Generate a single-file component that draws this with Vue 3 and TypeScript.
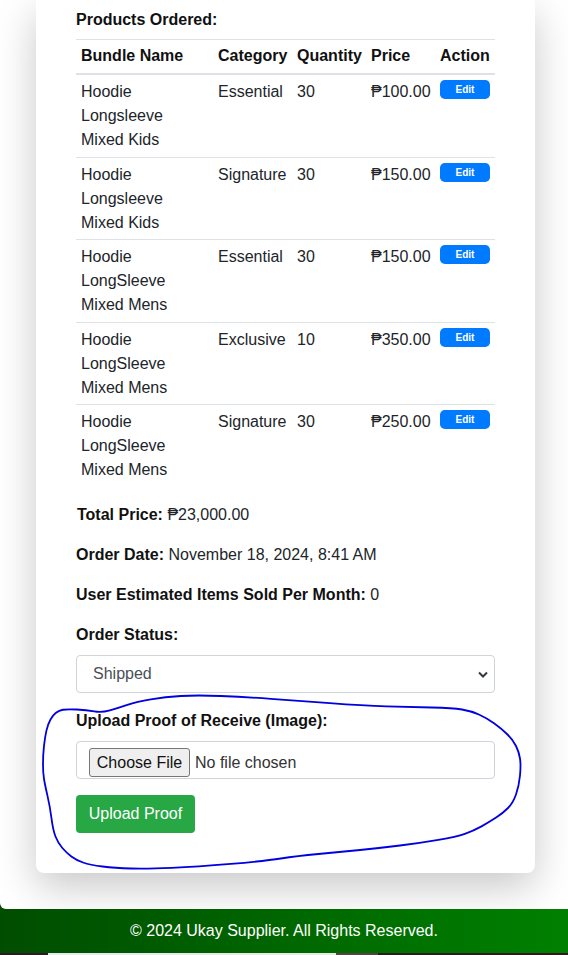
<script setup lang="ts">
interface Row { name: string[]; category: string; qty: number; price: string }
const rows: Row[] = [
  { name: ['Hoodie', 'Longsleeve', 'Mixed Kids'], category: 'Essential', qty: 30, price: '₱100.00' },
  { name: ['Hoodie', 'Longsleeve', 'Mixed Kids'], category: 'Signature', qty: 30, price: '₱150.00' },
  { name: ['Hoodie', 'LongSleeve', 'Mixed Mens'], category: 'Essential', qty: 30, price: '₱150.00' },
  { name: ['Hoodie', 'LongSleeve', 'Mixed Mens'], category: 'Exclusive', qty: 10, price: '₱350.00' },
  { name: ['Hoodie', 'LongSleeve', 'Mixed Mens'], category: 'Signature', qty: 30, price: '₱250.00' },
]

const pts: [number, number][] = [
  [101.7, 712.7], [118, 708], [136.7, 701.7], [165, 697], [196.7, 695], [245, 697], [296.7, 700.7],
  [363, 705.7], [410, 707], [453, 708], [471, 711], [486.7, 718], [502, 729], [513, 740], [519, 752], [521, 765],
  [519, 786], [513, 803], [503, 813], [490, 821.7], [473, 831], [456.7, 836.7], [420, 843], [380, 848], [340, 852],
  [296.7, 856], [265, 861], [196.7, 866.7], [146.7, 869], [115, 868], [90, 865], [76, 860], [66.7, 853], [58, 843], [53, 830],
  [50, 806.7], [45, 785], [43, 773], [43, 755], [45, 736.7], [48, 724], [53, 715], [59, 710.5], [66.7, 709], [86.7, 710],
]
const scribble = (() => {
  const mid = (a: [number, number], b: [number, number]) => `${(a[0] + b[0]) / 2} ${(a[1] + b[1]) / 2}`
  let d = `M${mid(pts[pts.length - 1], pts[0])}`
  pts.forEach((p, i) => {
    d += ` Q${p[0]} ${p[1]} ${mid(p, pts[(i + 1) % pts.length])}`
  })
  return d + ' Z'
})()
</script>

<template>
  <div class="page">
    <main class="stage">
      <section class="card">
        <p class="heading"><strong>Products Ordered:</strong></p>
        <table class="table">
          <thead>
            <tr>
              <th class="c1">Bundle Name</th>
              <th class="c2">Category</th>
              <th class="c3">Quantity</th>
              <th class="c4">Price</th>
              <th class="c5">Action</th>
            </tr>
          </thead>
          <tbody>
            <tr v-for="(r, i) in rows" :key="i">
              <td><span v-for="n in r.name" :key="n" class="line">{{ n }}</span></td>
              <td>{{ r.category }}</td>
              <td>{{ r.qty }}</td>
              <td>{{ r.price }}</td>
              <td><button class="edit" type="button">Edit</button></td>
            </tr>
          </tbody>
        </table>
        <p class="total"><strong>Total Price:</strong> ₱23,000.00</p>
        <p class="info"><strong>Order Date:</strong> November 18, 2024, 8:41 AM</p>
        <p class="info"><strong>User Estimated Items Sold Per Month:</strong> 0</p>
        <p class="label"><strong>Order Status:</strong></p>
        <div class="select">
          <span>Shipped</span>
          <svg width="10" height="7" viewBox="0 0 10 7"><path d="M1 1.5 L5 5.5 L9 1.5" fill="none" stroke="#343a40" stroke-width="2"/></svg>
        </div>
        <p class="label upload-label"><strong>Upload Proof of Receive (Image):</strong></p>
        <div class="file">
          <span class="choose">Choose File</span>
          <span class="none">No file chosen</span>
        </div>
        <button class="upload" type="button">Upload Proof</button>
      </section>
      <svg class="scribble" width="568" height="955" viewBox="0 0 568 955">
        <path :d="scribble" fill="none" stroke="#0000e0" stroke-width="1.8"/>
      </svg>
    </main>
    <footer class="footer">© 2024 Ukay Supplier. All Rights Reserved.</footer>
    <div class="strip">
      <span class="s-a"></span><span class="s-b"></span><span class="s-c"></span>
    </div>
  </div>
</template>

<style>
html, body { margin: 0; padding: 0; background: #fff; overflow: hidden; }
</style>

<style scoped>
.page { width: 568px; height: 955px; overflow: hidden; background: #004d00; font-family: "Liberation Sans", Arial, sans-serif; font-size: 16px; line-height: 24px; color: #212529; display: flex; flex-direction: column; }
.stage { position: relative; height: 909px; flex: none; background: #fff; border-bottom-left-radius: 6px; overflow: hidden; }
.card { box-sizing: border-box; width: 499px; height: 873px; margin-left: 36px; padding: 8px 40px 0; background: #fff; border-radius: 0 0 8px 8px; box-shadow: 0 14px 40px rgba(0,0,0,.22); }
.heading { margin: 0 0 7px; }
strong { font-weight: 700; color: #111; }
.table { width: 419px; border-collapse: collapse; table-layout: fixed; color: #212529; }
th { text-align: left; padding: 4px 5px 5px; line-height: 24px; border-top: 1px solid #dee2e6; border-bottom: 2px solid #dee2e6; color: #111; white-space: nowrap; font-weight: 700; }
td { padding: 5px 5px 4.5px; vertical-align: top; border-bottom: 1px solid #dee2e6; white-space: nowrap; }
tbody tr:last-child td { border-bottom: none; }
.c1 { width: 127px; } .c2 { width: 69px; } .c3 { width: 64px; } .c4 { width: 59px; } .c5 { width: 50px; }
.line { display: block; }
.edit { display: block; box-sizing: border-box; width: 50px; height: 19px; padding: 0; border: 0; border-radius: 4.8px; background: #007bff; color: #fff; font: 700 10px/19px "Liberation Sans", Arial, sans-serif; }
.total { margin: 16px 0 16px 1px; }
.info { margin: 0 0 16px; }
.label { margin: 0 0 8px; }
.select { box-sizing: border-box; height: 38px; width: 419px; border: 1px solid #ced4da; border-radius: 4px; padding: 1px 6px 0 16px; display: flex; align-items: center; justify-content: space-between; color: #495057; }
.upload-label { margin: 16px 0 8px; }
.file { box-sizing: border-box; height: 38px; width: 419px; border: 1px solid #ced4da; border-radius: 4px; padding: 6px 12px 0; display: flex; align-items: flex-start; gap: 5px; color: #495057; }
.choose { box-sizing: border-box; height: 29px; width: 101px; background: #efefef; border: 1px solid #767676; border-radius: 3px; color: #111; text-align: center; line-height: 27px; white-space: nowrap; }
.none { color: #333; line-height: 29px; }
.upload { display: block; margin-top: 16px; box-sizing: border-box; width: 119px; height: 38px; border: 0; border-radius: 4px; background: #28a745; color: #fff; font: 16px/24px "Liberation Sans", Arial, sans-serif; padding: 0; }
.scribble { position: absolute; left: 0; top: 0; pointer-events: none; }
.footer { height: 44px; flex: none; background: linear-gradient(90deg, #004d00, #008000); color: #fff; text-align: center; line-height: 43px; }
.strip { flex: 1; display: flex; background: #2e1a22; }
.s-a { width: 48px; } .s-b { width: 288px; background: #e8e8e8; } .s-c { width: 42px; background: #5a4048; }
</style>
